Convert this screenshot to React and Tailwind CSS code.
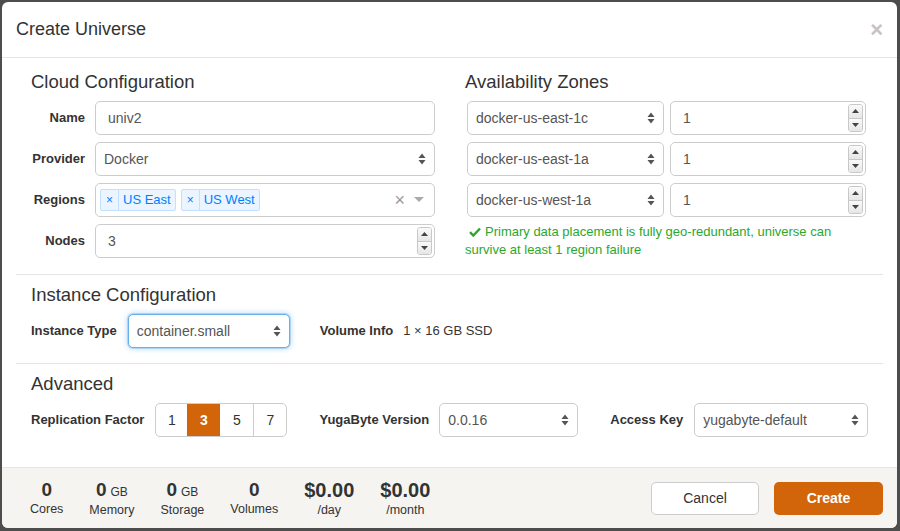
import React from 'react'

const font = { fontFamily: '"Liberation Sans", Arial, sans-serif' }

// small up/down arrows used by native-looking selects
function SelectArrows() {
  return (
    <svg width="8" height="12" viewBox="0 0 8 12" className="shrink-0">
      <path d="M4 0.5 L7.5 5 L0.5 5 Z" fill="#555" />
      <path d="M4 11.5 L7.5 7 L0.5 7 Z" fill="#555" />
    </svg>
  )
}

function Select({ value, className = '', focused = false }) {
  return (
    <div
      className={`shrink-0 flex items-center justify-between h-[34px] rounded-[5px] border bg-white pl-[8px] pr-[8px] text-[14px] text-[#555] whitespace-nowrap ${
        focused
          ? 'border-[#66afe9] shadow-[0_0_0_1px_rgba(102,175,233,0.35),0_0_6px_rgba(102,175,233,0.6)]'
          : 'border-[#ccc]'
      } ${className}`}
    >
      <span>{value}</span>
      <SelectArrows />
    </div>
  )
}

function NumberInput({ value, className = '' }) {
  return (
    <div
      className={`relative flex items-center h-[34px] rounded-[5px] border border-[#ccc] bg-white pl-3 text-[14px] text-[#555] ${className}`}
    >
      <span>{value}</span>
      <div className="absolute right-[2px] top-[2px] bottom-[2px] w-[15px] flex flex-col rounded-[3px] border border-[#c8c8c8] overflow-hidden">
        <div className="flex-1 flex items-center justify-center bg-gradient-to-b from-[#fafafa] to-[#e6e6e6] border-b border-[#c8c8c8]">
          <svg width="7" height="4" viewBox="0 0 7 4">
            <path d="M3.5 0 L7 4 L0 4 Z" fill="#444" />
          </svg>
        </div>
        <div className="flex-1 flex items-center justify-center bg-gradient-to-b from-[#fafafa] to-[#e6e6e6]">
          <svg width="7" height="4" viewBox="0 0 7 4">
            <path d="M0 0 L7 0 L3.5 4 Z" fill="#444" />
          </svg>
        </div>
      </div>
    </div>
  )
}

function Tag({ label }) {
  return (
    <div className="flex items-center h-[22px] rounded-[2px] border border-[#c2e0ff] bg-[#ebf5ff] text-[#007eff] text-[13px] whitespace-nowrap">
      <span className="w-[18px] h-full flex items-center justify-center border-r border-[#c2e0ff] text-[12px]">×</span>
      <span className="px-[4px]">{label}</span>
    </div>
  )
}

function Row({ label, children }) {
  return (
    <div className="flex items-center">
      <div className="w-[54px] text-right text-[13px] font-bold text-[#333]">{label}</div>
      <div className="ml-[10px] flex-1">{children}</div>
    </div>
  )
}

function Stat({ value, unit, label, big = false }) {
  return (
    <div className="flex flex-col items-center text-[#333] whitespace-nowrap">
      <div className="leading-[22px]">
        <span className={`${big ? 'text-[20px]' : 'text-[19px]'} font-bold`}>{value}</span>
        {unit && <span className="text-[12px] ml-[4px]">{unit}</span>}
      </div>
      <div className="text-[12.5px] leading-[15px]">{label}</div>
    </div>
  )
}

const zones = ['docker-us-east-1c', 'docker-us-east-1a', 'docker-us-west-1a']

export default function App() {
  return (
    <div style={font} className="w-[900px] h-[531px] bg-[#4d4d4d] pt-[2px] pl-[2px]">
      <div className="w-[895px] h-[526px] rounded-[6px] bg-white flex flex-col overflow-hidden">
        {/* Header */}
        <div className="h-[56px] shrink-0 border-b border-[#e5e5e5] flex items-center justify-between pl-[14px] pr-[14px]">
          <h4 className="text-[18px] text-[#333]">Create Universe</h4>
          <span className="text-[22px] font-bold text-[#c4c4c4] leading-none">×</span>
        </div>

        {/* Body */}
        <div className="flex-1 px-[14px]">
          {/* Cloud configuration */}
          <div className="pt-[14px] pb-[15px] px-[15px] border-b border-[#e5e5e5] flex">
            <div className="w-[404px]">
              <h3 className="text-[18.5px] leading-[20px] text-[#333] mb-[9px]">Cloud Configuration</h3>
              <div className="flex flex-col gap-[7px]">
                <Row label="Name">
                  <div className="h-[34px] rounded-[5px] border border-[#ccc] flex items-center pl-3 text-[14px] text-[#555]">univ2</div>
                </Row>
                <Row label="Provider">
                  <Select value="Docker" />
                </Row>
                <Row label="Regions">
                  <div className="h-[34px] rounded-[5px] border border-[#ccc] flex items-center pl-[4px] pr-[10px] gap-[5px]">
                    <Tag label="US East" />
                    <Tag label="US West" />
                    <div className="flex-1" />
                    <span className="text-[18px] text-[#999] leading-none">×</span>
                    <svg width="10" height="6" viewBox="0 0 10 6" className="ml-[4px]">
                      <path d="M0 0 L10 0 L5 5 Z" fill="#aaa" />
                    </svg>
                  </div>
                </Row>
                <Row label="Nodes">
                  <NumberInput value="3" />
                </Row>
              </div>
            </div>
            <div className="ml-[30px] flex-1">
              <h3 className="text-[18.5px] leading-[20px] text-[#333] mb-[9px]">Availability Zones</h3>
              <div className="flex flex-col gap-[7px] pl-[2px] pr-[2px]">
                {zones.map((z) => (
                  <div key={z} className="flex gap-[6px]">
                    <Select value={z} className="w-[197px]" />
                    <NumberInput value="1" className="flex-1" />
                  </div>
                ))}
              </div>
              <p className="mt-[6px] text-[13px] leading-[18px] text-[#2ba82b]">
                <svg width="12" height="10" viewBox="0 0 12 10" className="inline-block ml-[4px] mr-[4px] align-[-1px]">
                  <path d="M1 5.2 L4.3 8.5 L11 1.5" fill="none" stroke="#2ba82b" strokeWidth="2.4" />
                </svg>
                Primary data placement is fully geo-redundant, universe can survive at least 1 region failure
              </p>
            </div>
          </div>

          {/* Instance configuration */}
          <div className="pt-[10px] pb-[15px] px-[15px] border-b border-[#e5e5e5]">
            <h3 className="text-[18.5px] leading-[20px] text-[#333] mb-[9px]">Instance Configuration</h3>
            <div className="flex items-center whitespace-nowrap">
              <span className="text-[13px] font-bold text-[#333]">Instance Type</span>
              <Select value="container.small" focused className="w-[162px] ml-[11px]" />
              <span className="ml-[30px] text-[13px] font-bold text-[#333]">Volume Info</span>
              <span className="ml-[10px] text-[13px] text-[#333]">1 × 16 GB SSD</span>
            </div>
          </div>

          {/* Advanced */}
          <div className="pt-[10px] px-[15px]">
            <h3 className="text-[18.5px] leading-[20px] text-[#333] mb-[9px]">Advanced</h3>
            <div className="flex items-center whitespace-nowrap">
              <span className="text-[13px] font-bold text-[#333]">Replication Factor</span>
              <div className="shrink-0 ml-[11px] flex h-[34px] rounded-[5px] border border-[#ccc] overflow-hidden text-[14px] text-[#333]">
                <div className="w-[31px] flex items-center justify-center">1</div>
                <div className="w-[33px] flex items-center justify-center bg-[#d2650a] text-white font-bold">3</div>
                <div className="w-[34px] flex items-center justify-center border-r border-[#ccc]">5</div>
                <div className="w-[32px] flex items-center justify-center">7</div>
              </div>
              <span className="ml-[32px] text-[13px] font-bold text-[#333]">YugaByte Version</span>
              <Select value="0.0.16" className="w-[139px] ml-[10px]" />
              <span className="ml-[32px] text-[13px] font-bold text-[#333]">Access Key</span>
              <Select value="yugabyte-default" className="w-[174px] ml-[11px]" />
            </div>
          </div>
        </div>

        {/* Footer */}
        <div className="h-[61px] shrink-0 border-t border-[#e5e5e5] bg-[#f5f4f1] flex items-center pl-[28px] pr-[14px]">
          <div className="flex gap-[26px]">
            <Stat value="0" label="Cores" />
            <Stat value="0" unit="GB" label="Memory" />
            <Stat value="0" unit="GB" label="Storage" />
            <Stat value="0" label="Volumes" />
            <Stat value="$0.00" label="/day" big />
            <Stat value="$0.00" label="/month" big />
          </div>
          <div className="flex-1" />
          <button className="w-[108px] h-[33px] rounded-[5px] border border-[#ccc] bg-white text-[14px] text-[#333]">Cancel</button>
          <button className="ml-[15px] w-[109px] h-[33px] rounded-[5px] bg-[#d2650a] text-[14px] font-bold text-white">Create</button>
        </div>
      </div>
    </div>
  )
}
